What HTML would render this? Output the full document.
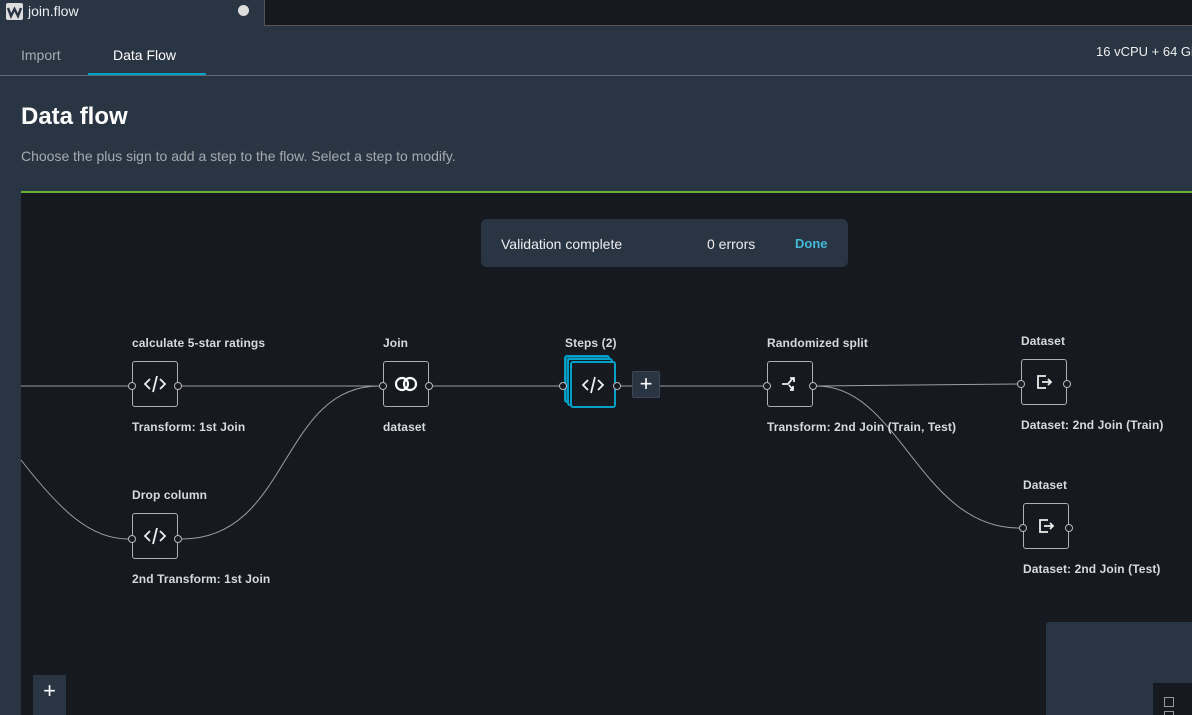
<!DOCTYPE html>
<html><head><style>
*{margin:0;padding:0;box-sizing:border-box}
html,body{width:1192px;height:715px;overflow:hidden}
body{background:#2a3544;font-family:"Liberation Sans",sans-serif;position:relative;color:#fff}
.a{position:absolute}
.tabbar{left:0;top:0;width:1192px;height:26px;background:#2a3544}
.dark{left:264px;top:0;width:928px;height:26px;background:#16191f;border-left:1px solid #555;border-bottom:1px solid #555}
.lbl{position:absolute;font-size:12px;color:#d5dbdb;white-space:nowrap;font-weight:bold;letter-spacing:0.1px}
.node{position:absolute;width:46px;height:46px;border:1px solid #aab0b5;border-radius:3px;background:#16191f;display:flex;align-items:center;justify-content:center;color:#e5e7e8}
</style></head><body>
<div class="a tabbar"></div>
<div class="a dark"></div>
<svg class="a" style="left:6px;top:3px" width="17" height="17" viewBox="0 0 17 17"><rect width="17" height="17" rx="2" fill="#ddd"/><path d="M2 5 L5 13 L8.5 6 L12 13 L15 5" stroke="#2a3544" stroke-width="2.4" fill="none"/></svg>
<div class="a" style="left:28px;top:3px;font-size:14px;color:#eee">join.flow</div>
<div class="a" style="left:238px;top:5px;width:11px;height:11px;border-radius:50%;background:#ddd"></div>
<div class="a" style="left:21px;top:47px;font-size:14px;color:#a5abb0">Import</div>
<div class="a" style="left:113px;top:47px;font-size:14px;color:#fff">Data Flow</div>
<div class="a" style="left:88px;top:73px;width:118px;height:2px;background:#00a1c9"></div>
<div class="a" style="left:0;top:75px;width:1192px;height:1px;background:#5f6b7a"></div>
<div class="a" style="left:1096px;top:44px;font-size:13px;color:#eee;white-space:nowrap">16 vCPU + 64 GiB</div>
<div class="a" style="left:21px;top:103px;font-size:24px;color:#fff;font-weight:bold">Data flow</div>
<div class="a" style="left:21px;top:148px;font-size:14px;color:#a5abb0">Choose the plus sign to add a step to the flow. Select a step to modify.</div>
<div class="a" style="left:21px;top:191px;width:1171px;height:2px;background:#6aaf35"></div>
<div class="a" style="left:21px;top:193px;width:1171px;height:522px;background:#16191f"></div>

<div class="a" style="left:481px;top:219px;width:367px;height:48px;background:#2a3544;border-radius:6px"></div>
<div class="a" style="left:501px;top:236px;font-size:14px;color:#eee">Validation complete</div>
<div class="a" style="left:707px;top:236px;font-size:14px;color:#eee">0 errors</div>
<div class="a" style="left:795px;top:236px;font-size:13px;color:#44b9d6;font-weight:bold">Done</div>

<svg class="a" style="left:0;top:0" width="1192" height="715">
<g stroke="#9aa0a6" stroke-width="1" fill="none">
<path d="M21 386 H128"/>
<path d="M21 460 C60 510 90 539 128 539"/>
<path d="M182 386 H379"/>
<path d="M182 539 C290 539 280 386 379 386"/>
<path d="M433 386 H562"/>
<path d="M620 386 H632"/>
<path d="M660 386 H763"/>
<path d="M817 386 C900 385 960 384 1017 384"/>
<path d="M817 386 C900 386 920 528 1019 528"/>
</g>
</svg>

<div class="lbl" style="left:132px;top:336px">calculate 5-star ratings</div>
<div class="node" style="left:132px;top:361px"><svg width="24" height="20" viewBox="0 0 24 20" fill="none" stroke="#eee" stroke-width="1.8"><path d="M7 5 L2 10 L7 15 M17 5 L22 10 L17 15 M14 2 L10 18"/></svg></div>
<div class="lbl" style="left:132px;top:420px">Transform: 1st Join</div>

<div class="lbl" style="left:132px;top:488px">Drop column</div>
<div class="node" style="left:132px;top:513px"><svg width="24" height="20" viewBox="0 0 24 20" fill="none" stroke="#eee" stroke-width="1.8"><path d="M7 5 L2 10 L7 15 M17 5 L22 10 L17 15 M14 2 L10 18"/></svg></div>
<div class="lbl" style="left:132px;top:572px">2nd Transform: 1st Join</div>

<div class="lbl" style="left:383px;top:336px">Join</div>
<div class="node" style="left:383px;top:361px"><svg width="24" height="16" viewBox="0 0 24 16" fill="none" stroke="#fff" stroke-width="2.2"><circle cx="8" cy="8" r="6"/><circle cx="16" cy="8" r="6"/></svg></div>
<div class="lbl" style="left:383px;top:420px">dataset</div>

<div class="lbl" style="left:565px;top:336px">Steps (2)</div>
<div class="a" style="left:564px;top:355px;width:46px;height:48px;border:2px solid #00a1c9;border-radius:3px;background:#0b6e8a"></div>
<div class="a" style="left:567px;top:358px;width:46px;height:48px;border:2px solid #00a1c9;border-radius:3px;background:#16191f"></div>
<div class="node" style="left:570px;top:361px;border:2px solid #00a1c9;height:47px"><svg width="24" height="20" viewBox="0 0 24 20" fill="none" stroke="#eee" stroke-width="1.8"><path d="M7 5 L2 10 L7 15 M17 5 L22 10 L17 15 M14 2 L10 18"/></svg></div>
<div class="a" style="left:632px;top:371px;width:28px;height:27px;background:#2a3544;border:1px solid #3d4754;border-radius:2px;color:#fff;font-size:22px;line-height:24px;text-align:center">+</div>

<div class="lbl" style="left:767px;top:336px">Randomized split</div>
<div class="node" style="left:767px;top:361px"><svg width="20" height="18" viewBox="0 0 20 18" fill="none" stroke="#eee" stroke-width="1.8"><path d="M2 9 H8 L13 3 M10 3 H14 V7 M9 10 L13 15 M13 11 V15 H10"/></svg></div>
<div class="lbl" style="left:767px;top:420px">Transform: 2nd Join (Train, Test)</div>

<div class="lbl" style="left:1021px;top:334px">Dataset</div>
<div class="node" style="left:1021px;top:359px"><svg width="18" height="18" viewBox="0 0 18 18" fill="none" stroke="#eee" stroke-width="1.8"><path d="M11 3 H3 V15 H11 M7 9 H16 M13 6 L16 9 L13 12"/></svg></div>
<div class="lbl" style="left:1021px;top:418px">Dataset: 2nd Join (Train)</div>

<div class="lbl" style="left:1023px;top:478px">Dataset</div>
<div class="node" style="left:1023px;top:503px"><svg width="18" height="18" viewBox="0 0 18 18" fill="none" stroke="#eee" stroke-width="1.8"><path d="M11 3 H3 V15 H11 M7 9 H16 M13 6 L16 9 L13 12"/></svg></div>
<div class="lbl" style="left:1023px;top:562px">Dataset: 2nd Join (Test)</div>

<svg class="a" style="left:0;top:0" width="1192" height="715">
<g stroke="#b5bbc0" fill="#16191f">
<circle cx="132" cy="386" r="3.5"/><circle cx="178" cy="386" r="3.5"/>
<circle cx="132" cy="539" r="3.5"/><circle cx="178" cy="539" r="3.5"/>
<circle cx="383" cy="386" r="3.5"/><circle cx="429" cy="386" r="3.5"/>
<circle cx="563" cy="386" r="3.5"/><circle cx="617" cy="386" r="3.5"/>
<circle cx="767" cy="386" r="3.5"/><circle cx="813" cy="386" r="3.5"/>
<circle cx="1021" cy="384" r="3.5"/><circle cx="1067" cy="384" r="3.5"/>
<circle cx="1023" cy="528" r="3.5"/><circle cx="1069" cy="528" r="3.5"/>
</g>
</svg>

<div class="a" style="left:1046px;top:622px;width:146px;height:93px;background:#2a3544;border-radius:3px 0 0 0"></div>
<div class="a" style="left:1153px;top:683px;width:39px;height:32px;background:#16191f"></div>
<div class="a" style="left:1164px;top:697px;width:10px;height:10px;border:1px solid #999"></div>
<div class="a" style="left:1164px;top:711px;width:10px;height:4px;border:1px solid #999;border-bottom:none"></div>

<div class="a" style="left:33px;top:675px;width:33px;height:40px;background:#2a3544;color:#fff;font-size:22px;text-align:center;line-height:32px">+</div>
</body></html>
